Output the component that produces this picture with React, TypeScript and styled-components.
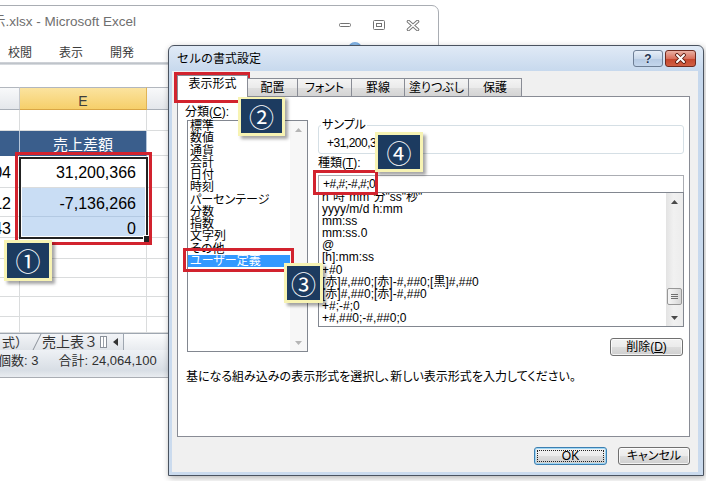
import React from "react";
import styled, { createGlobalStyle, css } from "styled-components";

const GlobalStyle = createGlobalStyle`
  html, body {
    margin: 0;
    padding: 0;
    background: #ffffff;
    overflow: hidden;
  }
`;

const Screen = styled.div`
  position: relative;
  width: 706px;
  height: 481px;
  overflow: hidden;
  background: #ffffff;
  font-family: "Liberation Sans", "Noto Sans CJK JP", sans-serif;
  color: #000;
`;

// Excel window behind the dialog
const ExcelWindow = styled.div`
  position: absolute;
  left: -1px;
  top: 5px;
  width: 440px;
  height: 373px;
  box-sizing: border-box;
  display: flex;
  flex-direction: column;
  border: 1px solid #a9adb3;
  border-top-right-radius: 7px;
  background: #fff;
  overflow: hidden;
`;

const ExcelTitleBar = styled.div`
  flex: none;
  height: 34px;
  display: flex;
  align-items: flex-start;
`;

const ExcelTitle = styled.div`
  margin: 8px 0 0 -8px;
  font-size: 13.5px;
  line-height: 16px;
  color: #6f6f6f;
  white-space: nowrap;
`;

const WindowControls = styled.div`
  display: flex;
  margin: 9px 8px 0 auto;
`;

const WindowControl = styled.div`
  width: 34px;
  height: 20px;
  display: flex;
  align-items: center;
  justify-content: center;
`;

const RibbonTabs = styled.div`
  flex: none;
  height: 22px;
  display: flex;
  align-items: center;
  gap: 27px;
  padding-left: 8px;
  font-size: 12px;
  color: #3c3c3c;
`;

const HelpBubble = styled.div`
  align-self: flex-start;
  margin: 2px 76px 0 auto;
  width: 14px;
  height: 14px;
  border-radius: 50%;
  background: radial-gradient(circle at 50% 30%, #9cc8f0, #2f73c4);
`;

const RibbonEdge = styled.div`
  flex: none;
  height: 3px;
  background: linear-gradient(#d4d7dc, #bfc4ca 50%, #e2e5e9);
`;

const FormulaGap = styled.div`
  flex: none;
  height: 22px;
`;

const SheetGrid = styled.div`
  flex: none;
  display: grid;
  grid-template-columns: 20px 127px 1fr;
  grid-template-rows: 23px 21px 25px 32px 29px 21px 21px 19px 19px 20px 16px;
`;

type CellKind = "plain" | "head" | "headActive" | "title" | "selected";

const cellKinds = {
  plain: css`
    background: #fff;
  `,
  head: css`
    background: linear-gradient(#f8f9fa, #e4e7eb);
    border-top: 1px solid #b2b7be;
    border-right-color: #c6cad0;
    border-bottom-color: #a9afb7;
  `,
  headActive: css`
    background: linear-gradient(#fbe39f, #f6cf6a);
    border-top: 1px solid #b2b7be;
    border-right-color: #e0b456;
    border-bottom-color: #d9a645;
    justify-content: center;
    padding: 5px 0 0;
    font-size: 14px;
    color: #3d3d3d;
  `,
  title: css`
    background: #3a5e8c;
    color: #fff;
    border-right-color: #b5c5d9;
    border-bottom-color: #3a5e8c;
    justify-content: center;
    padding: 3px 0 0;
    font-size: 15px;
  `,
  selected: css`
    background: #c9ddf4;
    border-right-color: #b3c9e2;
    border-bottom-color: #b3c9e2;
  `,
};

const Cell = styled.div<{ $kind?: CellKind }>`
  box-sizing: border-box;
  display: flex;
  align-items: center;
  justify-content: flex-end;
  padding: 3px 10px 0 0;
  border-right: 1px solid #dadcdd;
  border-bottom: 1px solid #dadcdd;
  font-size: 16px;
  line-height: 18px;
  white-space: nowrap;
  overflow: hidden;
  ${(p) => cellKinds[p.$kind ?? "plain"]}
`;

const SideCell = styled(Cell)`
  padding-right: 8px;
`;

const Selection = styled.div`
  position: absolute;
  left: 19px;
  top: 151px;
  width: 129px;
  height: 82px;
  box-sizing: border-box;
  border: 2px solid #222;
  box-shadow: inset 0 0 0 1px #fff;
`;

const FillHandle = styled.div`
  position: absolute;
  left: 143px;
  top: 229px;
  width: 6px;
  height: 6px;
  background: #222;
  border: 1px solid #fff;
`;

const SheetBar = styled.div`
  flex: none;
  height: 17px;
  box-sizing: border-box;
  display: flex;
  align-items: stretch;
  border-top: 1px solid #9ea6b0;
  background: linear-gradient(#f2f4f7, #dfe3e8);
  font-size: 13px;
  color: #333;
`;

const SheetTab = styled.div<{ $size?: number; $offset?: number }>`
  display: flex;
  align-items: center;
  margin-left: ${(p) => p.$offset ?? 0}px;
  white-space: nowrap;
  font-size: ${(p) => p.$size ?? 13}px;
  line-height: 15px;
`;

const TabSlant = styled.div`
  display: flex;
  align-items: center;
  margin: 0 0 0 4px;
`;

const TabSplitter = styled.div`
  align-self: center;
  margin-left: 2px;
  width: 7px;
  height: 12px;
  box-sizing: border-box;
  border: 1px solid #8a9099;
  background: linear-gradient(90deg, #fff 40%, #9aa0a8 40%, #9aa0a8 60%, #fff 60%);
`;

const SheetArrow = styled.div`
  display: flex;
  align-items: center;
  width: 16px;
  justify-content: center;
`;

const HScrollTrack = styled.div`
  flex: 1;
  border-left: 1px solid #9ea6b0;
  background: linear-gradient(#fbfcfd, #e8ebef);
`;

const StatusBar = styled.div`
  flex: 1;
  display: flex;
  gap: 20px;
  padding-top: 3px;
  background: linear-gradient(#eef1f5, #d8dee5 75%, #e9ecf0);
  font-size: 13px;
  line-height: 15px;
  color: #303030;
  white-space: nowrap;
`;

const StatusItem = styled.span<{ $offset?: number }>`
  margin-left: ${(p) => p.$offset ?? 0}px;
`;

// Format Cells dialog
const Dialog = styled.div`
  position: absolute;
  left: 168px;
  top: 45px;
  width: 536px;
  height: 431px;
  box-sizing: border-box;
  display: flex;
  flex-direction: column;
  padding: 0 5px 3px 3px;
  border: 1px solid #4a5360;
  border-radius: 6px 6px 0 0;
  background: linear-gradient(#e0eaf6, #c6d8ed 26px, #cbdbee);
  box-shadow: 1px 2px 6px rgba(0, 0, 0, 0.3);
  font-size: 12px;
  color: #000;
`;

const DialogTitleBar = styled.div`
  flex: none;
  height: 25px;
  display: flex;
  align-items: center;
`;

const DialogTitle = styled.div`
  padding-left: 5px;
  line-height: 14px;
  white-space: nowrap;
`;

const TitleButtons = styled.div`
  align-self: flex-start;
  display: flex;
  gap: 2px;
  margin: 4px 2px 0 auto;
`;

const TitleButton = styled.div<{ $close?: boolean }>`
  width: ${(p) => (p.$close ? 31 : 30)}px;
  height: 17px;
  box-sizing: border-box;
  display: flex;
  align-items: center;
  justify-content: center;
  border: 1px solid #6d7e95;
  border-radius: 3px;
  background: linear-gradient(#e6eef8, #c9d8ea 50%, #b5c9e2 51%, #c4d6ec);
  font-weight: bold;
  font-size: 12px;
  color: #1f3350;
  text-shadow: 0 0 2px #fff;
  ${(p) =>
    p.$close &&
    css`
      border-color: #6f2a1f;
      background: linear-gradient(#eab1a4, #d9705c 50%, #c4452c 51%, #d15f43);
    `}
`;

const DialogClient = styled.div`
  flex: 1;
  display: flex;
  flex-direction: column;
  padding: 4px 8px 0 5px;
  background: #f0f0f0;
  font-feature-settings: "palt";
`;

const TabStrip = styled.div`
  flex: none;
  height: 22px;
  display: flex;
  align-items: flex-end;
  margin-bottom: -1px;
  position: relative;
  z-index: 1;
`;

const Tab = styled.div<{ $width: number; $active?: boolean }>`
  width: ${(p) => p.$width}px;
  height: 19px;
  box-sizing: border-box;
  margin-left: -1px;
  padding-top: 2px;
  text-align: center;
  line-height: 14px;
  white-space: nowrap;
  border: 1px solid #898c95;
  background: linear-gradient(#f4f4f4, #ebebeb 50%, #dfdfdf 51%, #d4d4d4);
  ${(p) =>
    p.$active &&
    css`
      position: relative;
      z-index: 2;
      margin-left: 0;
      height: 22px;
      padding-top: 1px;
      border-bottom: none;
      background: #fff;
    `}
`;

const TabPanel = styled.div`
  flex: none;
  height: 341px;
  box-sizing: border-box;
  display: flex;
  flex-direction: column;
  padding: 8px 0 0 7px;
  border: 1px solid #898c95;
  background: #fff;
`;

const PanelBody = styled.div`
  display: flex;
  align-items: flex-start;
`;

const LeftColumn = styled.div`
  width: 123px;
  display: flex;
  flex-direction: column;
`;

const RightColumn = styled.div`
  width: 366px;
  margin-left: 10px;
  display: flex;
  flex-direction: column;
`;

const FieldLabel = styled.div`
  height: 14px;
  line-height: 14px;
  white-space: nowrap;
`;

const Key = styled.span`
  text-decoration: underline;
`;

const ListBox = styled.div<{ $height: number; $clip?: boolean }>`
  display: flex;
  height: ${(p) => p.$height}px;
  box-sizing: border-box;
  border: 1px solid #828790;
  background: #fff;
  overflow: ${(p) => (p.$clip ? "hidden" : "visible")};
`;

const CategoryList = styled(ListBox)`
  margin: 1px 0 0 2px;
  width: 121px;
`;

const TypeList = styled(ListBox)`
  margin-top: -1px;
  position: relative;
`;

const ListItems = styled.div<{ $scroll: number }>`
  flex: 1;
  min-width: 0;
  display: flex;
  flex-direction: column;
  margin-top: ${(p) => -p.$scroll}px;
`;

const CategoryItem = styled.div<{ $selected?: boolean }>`
  height: 12.27px;
  line-height: 12.27px;
  padding-left: 2px;
  white-space: nowrap;
  ${(p) =>
    p.$selected &&
    css`
      background: #3399ff;
      color: #fff;
    `}
`;

const TypeItem = styled.div`
  flex: none;
  height: 12.1px;
  line-height: 12.1px;
  padding-left: 3px;
  white-space: nowrap;
`;

const ScrollBar = styled.div<{ $disabled?: boolean }>`
  flex: none;
  width: 17px;
  display: flex;
  flex-direction: column;
  background: ${(p) =>
    p.$disabled ? "#f7f7f7" : "linear-gradient(90deg, #e3e3e3, #f1f1f1 45%, #ececec)"};
`;

const ScrollArrow = styled.div`
  flex: none;
  height: 17px;
  display: flex;
  align-items: center;
  justify-content: center;
`;

const ScrollTrack = styled.div`
  flex: 1;
  display: flex;
  flex-direction: column;
  justify-content: flex-end;
  padding-bottom: 4px;
`;

const ScrollThumb = styled.div`
  height: 17px;
  margin: 0 1px;
  box-sizing: border-box;
  display: flex;
  align-items: center;
  justify-content: center;
  border: 1px solid #979797;
  border-radius: 2px;
  background: linear-gradient(90deg, #f5f5f5, #e7e7e7 50%, #d6d6d6);
`;

const SampleBox = styled.fieldset`
  margin: 13px 0 0;
  padding: 4px 8px 3px;
  min-width: 0;
  width: 100%;
  box-sizing: border-box;
  border: 1px solid #d5dfe5;
  border-radius: 3px;
`;

const SampleLegend = styled.legend`
  margin-left: -6px;
  padding: 0 1px;
  line-height: 14px;
`;

const SampleValue = styled.div`
  height: 14px;
  line-height: 14px;
  letter-spacing: -0.5px;
  white-space: nowrap;
`;

const TypeLabel = styled(FieldLabel)`
  margin-top: 2px;
`;

const TypeField = styled.div`
  margin-top: 5px;
  height: 18px;
  box-sizing: border-box;
  padding-left: 4px;
  line-height: 16px;
  letter-spacing: -0.5px;
  border: 1px solid #abadb3;
  background: #fff;
  white-space: nowrap;
`;

const PushButton = styled.div<{ $width: number; $default?: boolean }>`
  position: relative;
  width: ${(p) => p.$width}px;
  height: 18px;
  box-sizing: border-box;
  display: flex;
  align-items: center;
  justify-content: center;
  border: 1px solid #707070;
  border-radius: 3px;
  background: linear-gradient(#f2f2f2, #ebebeb 49%, #dddddd 50%, #cfcfcf);
  box-shadow: inset 0 0 0 1px rgba(255, 255, 255, 0.75);
  line-height: 14px;
  white-space: nowrap;
  ${(p) =>
    p.$default &&
    css`
      border-color: #3c7fb1;
      box-shadow: inset 0 0 0 1px #9fd6f4;
      &::after {
        content: "";
        position: absolute;
        inset: 2px;
        border: 1px dotted #222;
      }
    `}
`;

const DeleteButton = styled(PushButton)`
  align-self: flex-end;
  margin: 11px 1px 0 0;
`;

const Description = styled.div`
  margin: 14px 0 0 1px;
  line-height: 14px;
  white-space: nowrap;
`;

const ButtonRow = styled.div`
  display: flex;
  justify-content: flex-end;
  gap: 11px;
  padding-top: 10px;
`;

// Annotation overlays
type Box = { $x: number; $y: number; $w: number; $h: number };

const Highlight = styled.div<Box>`
  position: absolute;
  left: ${(p) => p.$x}px;
  top: ${(p) => p.$y}px;
  width: ${(p) => p.$w}px;
  height: ${(p) => p.$h}px;
  box-sizing: border-box;
  border: 3px solid #d2232e;
`;

const Callout = styled.div<Box>`
  position: absolute;
  left: ${(p) => p.$x}px;
  top: ${(p) => p.$y}px;
  width: ${(p) => p.$w}px;
  height: ${(p) => p.$h}px;
  box-sizing: border-box;
  display: flex;
  align-items: center;
  justify-content: center;
  border: 3px solid #f7f3b3;
  background: #1c3b60;
  box-shadow: 3px 3px 3px rgba(0, 0, 0, 0.35);
  color: #fff;
  font-family: "Noto Sans CJK JP", "DejaVu Sans", sans-serif;
  font-size: 25px;
  line-height: 1;
`;

const Arrow = ({ dir, color }: { dir: "up" | "down"; color: string }) => (
  <svg width="7" height="4" viewBox="0 0 7 4">
    <path d={dir === "up" ? "M0 4 L3.5 0 L7 4 Z" : "M0 0 L3.5 4 L7 0 Z"} fill={color} />
  </svg>
);

const categories = [
  "標準",
  "数値",
  "通貨",
  "会計",
  "日付",
  "時刻",
  "パーセンテージ",
  "分数",
  "指数",
  "文字列",
  "その他",
  "ユーザー定義",
];

const formats = [
  'h"時"mm"分"ss"秒"',
  "yyyy/m/d h:mm",
  "mm:ss",
  "mm:ss.0",
  "@",
  "[h]:mm:ss",
  "+#0",
  "[赤]#,##0;[赤]-#,##0;[黒]#,##0",
  "[赤]#,##0;[赤]-#,##0",
  "+#;-#;0",
  "+#,##0;-#,##0;0",
];

const tabs = [
  { label: "表示形式", width: 71, active: true },
  { label: "配置", width: 51 },
  { label: "フォント", width: 55 },
  { label: "罫線", width: 54 },
  { label: "塗りつぶし", width: 65 },
  { label: "保護", width: 54 },
];

type SheetRow = { d?: string; e?: string; dKind?: CellKind; eKind?: CellKind };

const sheetRows: SheetRow[] = [
  {},
  { e: "売上差額", dKind: "title", eKind: "title" },
  { d: "04", e: "31,200,366" },
  { d: "12", e: "-7,136,266", eKind: "selected" },
  { d: "43", e: "0", eKind: "selected" },
  {},
  {},
  {},
  {},
  {},
];

export default function App() {
  return (
    <>
      <GlobalStyle />
      <Screen>
        <ExcelWindow>
          <ExcelTitleBar>
            <ExcelTitle>示.xlsx - Microsoft Excel</ExcelTitle>
            <WindowControls>
              <WindowControl>
                <svg width="12" height="6" viewBox="0 0 12 6">
                  <rect x="0.5" y="1.5" width="11" height="3" rx="1" fill="#fff" stroke="#737373" />
                </svg>
              </WindowControl>
              <WindowControl>
                <svg width="12" height="10" viewBox="0 0 12 10">
                  <rect x="0.5" y="0.5" width="11" height="9" rx="1" fill="#fff" stroke="#737373" />
                  <rect x="3.5" y="3.5" width="5" height="3" fill="none" stroke="#737373" />
                </svg>
              </WindowControl>
              <WindowControl>
                <svg width="14" height="11" viewBox="0 0 14 11">
                  <path d="M2.5 1.5 L11.5 9.5 M11.5 1.5 L2.5 9.5" stroke="#7a7a7a" strokeWidth="3.6" strokeLinecap="round" />
                  <path d="M2.5 1.5 L11.5 9.5 M11.5 1.5 L2.5 9.5" stroke="#fff" strokeWidth="1.6" strokeLinecap="round" />
                </svg>
              </WindowControl>
            </WindowControls>
          </ExcelTitleBar>
          <RibbonTabs>
            <span>校閲</span>
            <span>表示</span>
            <span>開発</span>
            <HelpBubble />
          </RibbonTabs>
          <RibbonEdge />
          <FormulaGap />
          <SheetGrid>
            <Cell $kind="head" />
            <Cell $kind="headActive">E</Cell>
            <Cell $kind="head" />
            {sheetRows.map((row, i) => (
              <React.Fragment key={i}>
                <SideCell $kind={row.dKind}>{row.d}</SideCell>
                <Cell $kind={row.eKind}>{row.e}</Cell>
                <Cell />
              </React.Fragment>
            ))}
          </SheetGrid>
          <SheetBar>
            <SheetTab $offset={2}>式）</SheetTab>
            <TabSlant>
              <svg width="10" height="16" viewBox="0 0 10 16">
                <path d="M1 16 L9 0" stroke="#8a9099" strokeWidth="1" />
              </svg>
            </TabSlant>
            <SheetTab $size={14}>売上表３</SheetTab>
            <TabSplitter />
            <SheetArrow>
              <svg width="5" height="8" viewBox="0 0 5 8">
                <path d="M5 0 L0 4 L5 8 Z" fill="#333" />
              </svg>
            </SheetArrow>
            <HScrollTrack />
          </SheetBar>
          <StatusBar>
            <StatusItem $offset={-2}>個数: 3</StatusItem>
            <StatusItem>合計: 24,064,100</StatusItem>
          </StatusBar>
          <Selection />
          <FillHandle />
        </ExcelWindow>

        <Dialog>
          <DialogTitleBar>
            <DialogTitle>セルの書式設定</DialogTitle>
            <TitleButtons>
              <TitleButton>?</TitleButton>
              <TitleButton $close>
                <svg width="13" height="11" viewBox="0 0 13 11">
                  <path d="M3 2 L10 9 M10 2 L3 9" stroke="#5b1d12" strokeWidth="3.8" strokeLinecap="round" />
                  <path d="M3 2 L10 9 M10 2 L3 9" stroke="#fff" strokeWidth="2" strokeLinecap="round" />
                </svg>
              </TitleButton>
            </TitleButtons>
          </DialogTitleBar>
          <DialogClient>
            <TabStrip>
              {tabs.map((t) => (
                <Tab key={t.label} $width={t.width} $active={t.active}>
                  {t.label}
                </Tab>
              ))}
            </TabStrip>
            <TabPanel>
              <PanelBody>
                <LeftColumn>
                  <FieldLabel>
                    分類(<Key>C</Key>):
                  </FieldLabel>
                  <CategoryList $height={232}>
                    <ListItems $scroll={1}>
                      {categories.map((c) => (
                        <CategoryItem key={c} $selected={c === "ユーザー定義"}>
                          {c}
                        </CategoryItem>
                      ))}
                    </ListItems>
                    <ScrollBar $disabled>
                      <ScrollArrow>
                        <Arrow dir="up" color="#b5b5b5" />
                      </ScrollArrow>
                      <ScrollTrack />
                      <ScrollArrow>
                        <Arrow dir="down" color="#b5b5b5" />
                      </ScrollArrow>
                    </ScrollBar>
                  </CategoryList>
                </LeftColumn>
                <RightColumn>
                  <SampleBox>
                    <SampleLegend>サンプル</SampleLegend>
                    <SampleValue>+31,200,366</SampleValue>
                  </SampleBox>
                  <TypeLabel>
                    種類(<Key>T</Key>):
                  </TypeLabel>
                  <TypeField>+#,#;-#,#;0</TypeField>
                  <TypeList $height={135} $clip>
                    <ListItems $scroll={2}>
                      {formats.map((f) => (
                        <TypeItem key={f}>{f}</TypeItem>
                      ))}
                    </ListItems>
                    <ScrollBar>
                      <ScrollArrow>
                        <Arrow dir="up" color="#4a4a4a" />
                      </ScrollArrow>
                      <ScrollTrack>
                        <ScrollThumb>
                          <svg width="7" height="7" viewBox="0 0 7 7">
                            <path d="M0 1.5 H7 M0 3.5 H7 M0 5.5 H7" stroke="#6e6e6e" strokeWidth="1" />
                          </svg>
                        </ScrollThumb>
                      </ScrollTrack>
                      <ScrollArrow>
                        <Arrow dir="down" color="#4a4a4a" />
                      </ScrollArrow>
                    </ScrollBar>
                  </TypeList>
                  <DeleteButton $width={73}>
                    削除(<Key>D</Key>)
                  </DeleteButton>
                </RightColumn>
              </PanelBody>
              <Description>
                基になる組み込みの表示形式を選択し、新しい表示形式を入力してください。
              </Description>
            </TabPanel>
            <ButtonRow>
              <PushButton $width={73} $default>
                OK
              </PushButton>
              <PushButton $width={72}>キャンセル</PushButton>
            </ButtonRow>
          </DialogClient>
        </Dialog>

        <Highlight $x={15} $y={152} $w={137} $h={93} />
        <Highlight $x={174} $y={72} $w={76} $h={31} />
        <Highlight $x={183} $y={248} $w={111} $h={24} />
        <Highlight $x={313} $y={170} $w={65} $h={25} />

        <Callout $x={4} $y={240} $w={48} $h={41}>
          ①
        </Callout>
        <Callout $x={238} $y={96} $w={47} $h={40}>
          ②
        </Callout>
        <Callout $x={284} $y={263} $w={39} $h={40}>
          ③
        </Callout>
        <Callout $x={375} $y={132} $w={48} $h={40}>
          ④
        </Callout>
      </Screen>
    </>
  );
}
